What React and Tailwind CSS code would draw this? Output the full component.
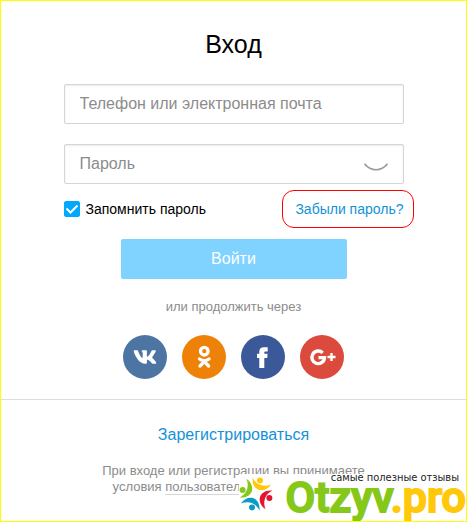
import { useState } from "react"
import { FaVk } from "react-icons/fa"

function OkIcon() {
  return (
    <svg viewBox="0 0 44 44" className="size-11" fill="none" stroke="#fff" strokeWidth="3.3" strokeLinecap="round" strokeLinejoin="round">
      <circle cx="22.3" cy="16.2" r="3.8" />
      <path d="M17.5 24C20.500 26 24.100 26 27.100 24M18 31L22.300 26.700L26.600 31" />
    </svg>
  )
}

function FacebookIcon() {
  return (
    <svg viewBox="0 0 44 44" className="size-11" fill="#fff">
      <path d="M18.3 33V23H16V18.7H18.3V16.5C18.3 13.6 20.2 12.2 22.8 12.2H26.7V16.5H24.6C23.6 16.5 23.3 17 23.3 17.9V18.7H26.6L26.2 23H23.3V33Z" />
    </svg>
  )
}

function GoogleIcon() {
  return (
    <svg viewBox="0 0 44 44" className="size-11" fill="none" stroke="#fff">
      <path d="M22.7 17.900A6.300 6.300 0 1 0 24.500 22.600H18.500" strokeWidth="3.4" />
      <path d="M27.500 22H35.500M31.500 18V26" strokeWidth="2.4" />
    </svg>
  )
}

function VkIcon() {
  return <FaVk size={24} />
}

const socials = [
  { name: "ВКонтакте", Icon: VkIcon, className: "bg-[#4d75a3]" },
  { name: "Одноклассники", Icon: OkIcon, className: "bg-[#ee8208]" },
  { name: "Facebook", Icon: FacebookIcon, className: "bg-[#3b5998]" },
  { name: "Google+", Icon: GoogleIcon, className: "bg-[#dc4a3d]" }
]

const inputClass =
  "w-full h-10 px-[15px] border border-[#d5d5d5] rounded-xs bg-white text-base text-[#333] placeholder:text-[#8c8c8c] shadow-[inset_0_1px_2px_rgba(0,0,0,0.08)] outline-none"

// Один человечек логотипа: голова и изогнутое тело
function Figure({ color, angle }) {
  return (
    <g transform={`rotate(${angle} 17 17)`} fill={color}>
      <circle cx="3.6" cy="13" r="3" />
      <path d="M7.500 2C16.500 7.500 15.500 21.500 0.500 20.500C8 17 10.500 9.500 7.500 2Z" />
    </g>
  )
}

// Плашка сайта отзывов поверх нижнего правого угла
function Watermark() {
  return (
    <div className="absolute right-0 bottom-0 w-[227px] h-[47px] flex justify-between bg-white">
      <svg width="34" height="34" viewBox="0 0 34 34" className="shrink-0 mt-[3px]" aria-hidden="true">
        <Figure color="#86c81a" angle={0} />
        <Figure color="#ffc80a" angle={90} />
        <Figure color="#e4132f" angle={180} />
        <Figure color="#0a9cc4" angle={270} />
      </svg>
      <div className="flex flex-col">
        <span className="pr-[7px] text-right text-[11px] leading-2 text-[#222] whitespace-nowrap font-['DejaVu_Sans_Condensed','DejaVu_Sans',sans-serif]">
          самые полезные отзывы
        </span>
        <span className="text-[43px] leading-[30px] font-medium text-[#86c81a] whitespace-nowrap font-['Roboto',sans-serif] [-webkit-text-stroke:2px_currentColor]">
          Otzyv<span className="text-[#ffc80a]">.pro</span>
        </span>
      </div>
    </div>
  )
}

export default function App() {
  const [remember, setRemember] = useState(true)
  const [visible, setVisible] = useState(false)

  return (
    <main className="relative min-h-screen overflow-hidden border border-[#ffff00] bg-white font-['Liberation_Sans',Arial,sans-serif]">

      <form
        className="flex flex-col items-center px-6 pt-[27px] pb-5 border-b border-[#ddd]"
        onSubmit={(e) => e.preventDefault()}
      >
        <h1 className="text-[25px] leading-8 text-black">Вход</h1>

        <div className="w-full max-w-[340px] mt-6">
          <input
            type="text"
            aria-label="Телефон или электронная почта"
            placeholder="Телефон или электронная почта"
            className={inputClass}
          />

          <div className="relative mt-5">
            <input
              type={visible ? "text" : "password"}
              aria-label="Пароль"
              placeholder="Пароль"
              className={inputClass}
            />
            <button
              type="button"
              aria-label="Показать пароль"
              onClick={() => setVisible(!visible)}
              className="absolute right-4 top-[18px] cursor-pointer"
            >
              <svg width="24" height="10" viewBox="0 0 24 10" fill="none" stroke="#999" strokeWidth="1.600">
                <path d="M0.500 1.800C7 9.800 17 9.800 23.500 1.800" />
              </svg>
            </button>
          </div>

          <div className="flex items-center justify-between mt-1.5 -mr-2.5">
            <label className="flex items-center gap-1.5 text-sm text-black cursor-pointer">
              <span className="relative flex">
                <input
                  type="checkbox"
                  checked={remember}
                  onChange={(e) => setRemember(e.target.checked)}
                  className="appearance-none size-4 rounded-xs border border-[#00a8ff] checked:bg-[#00a8ff]"
                />
                <svg viewBox="0 0 16 16" fill="none" stroke="#fff" strokeWidth="2" className="absolute inset-0 size-4 pointer-events-none">
                  <path d="M2.500 7.500L6.500 11.500L13.500 4.500" />
                </svg>
              </span>
              Запомнить пароль
            </label>
            <a href="#" className="pl-3 pr-[9px] py-2 border border-[#ff0000] rounded-xl text-sm text-[#1492d9]">
              Забыли пароль?
            </a>
          </div>
        </div>

        <button type="submit" className="w-full max-w-[226px] h-10 mt-[11px] rounded-xs bg-[#80d3ff] text-base text-white cursor-pointer">
          Войти
        </button>

        <p className="mt-[18px] text-[13px] leading-5 text-[#8c8c8c]">или продолжить через</p>

        <div className="flex gap-[15px] mt-[18px]">
          {socials.map(({ name, Icon, className }) => (
            <button
              key={name}
              type="button"
              aria-label={name}
              className={`flex items-center justify-center size-11 rounded-full text-white cursor-pointer ${className}`}
            >
              <Icon />
            </button>
          ))}
        </div>
      </form>

      <section className="flex flex-col items-center px-6 pt-[23px] text-center">
        <a href="#" className="text-base text-[#1492d9]">Зарегистрироваться</a>
        <p className="max-w-[280px] mt-4 text-[13px] leading-4 text-[#8c8c8c]">
          При входе или регистрации вы принимаете условия{" "}
          <a href="#" className="border-b border-[#d5d5d5]">пользовательского соглашения</a>
        </p>
      </section>

      <Watermark />
    </main>
  )
}
